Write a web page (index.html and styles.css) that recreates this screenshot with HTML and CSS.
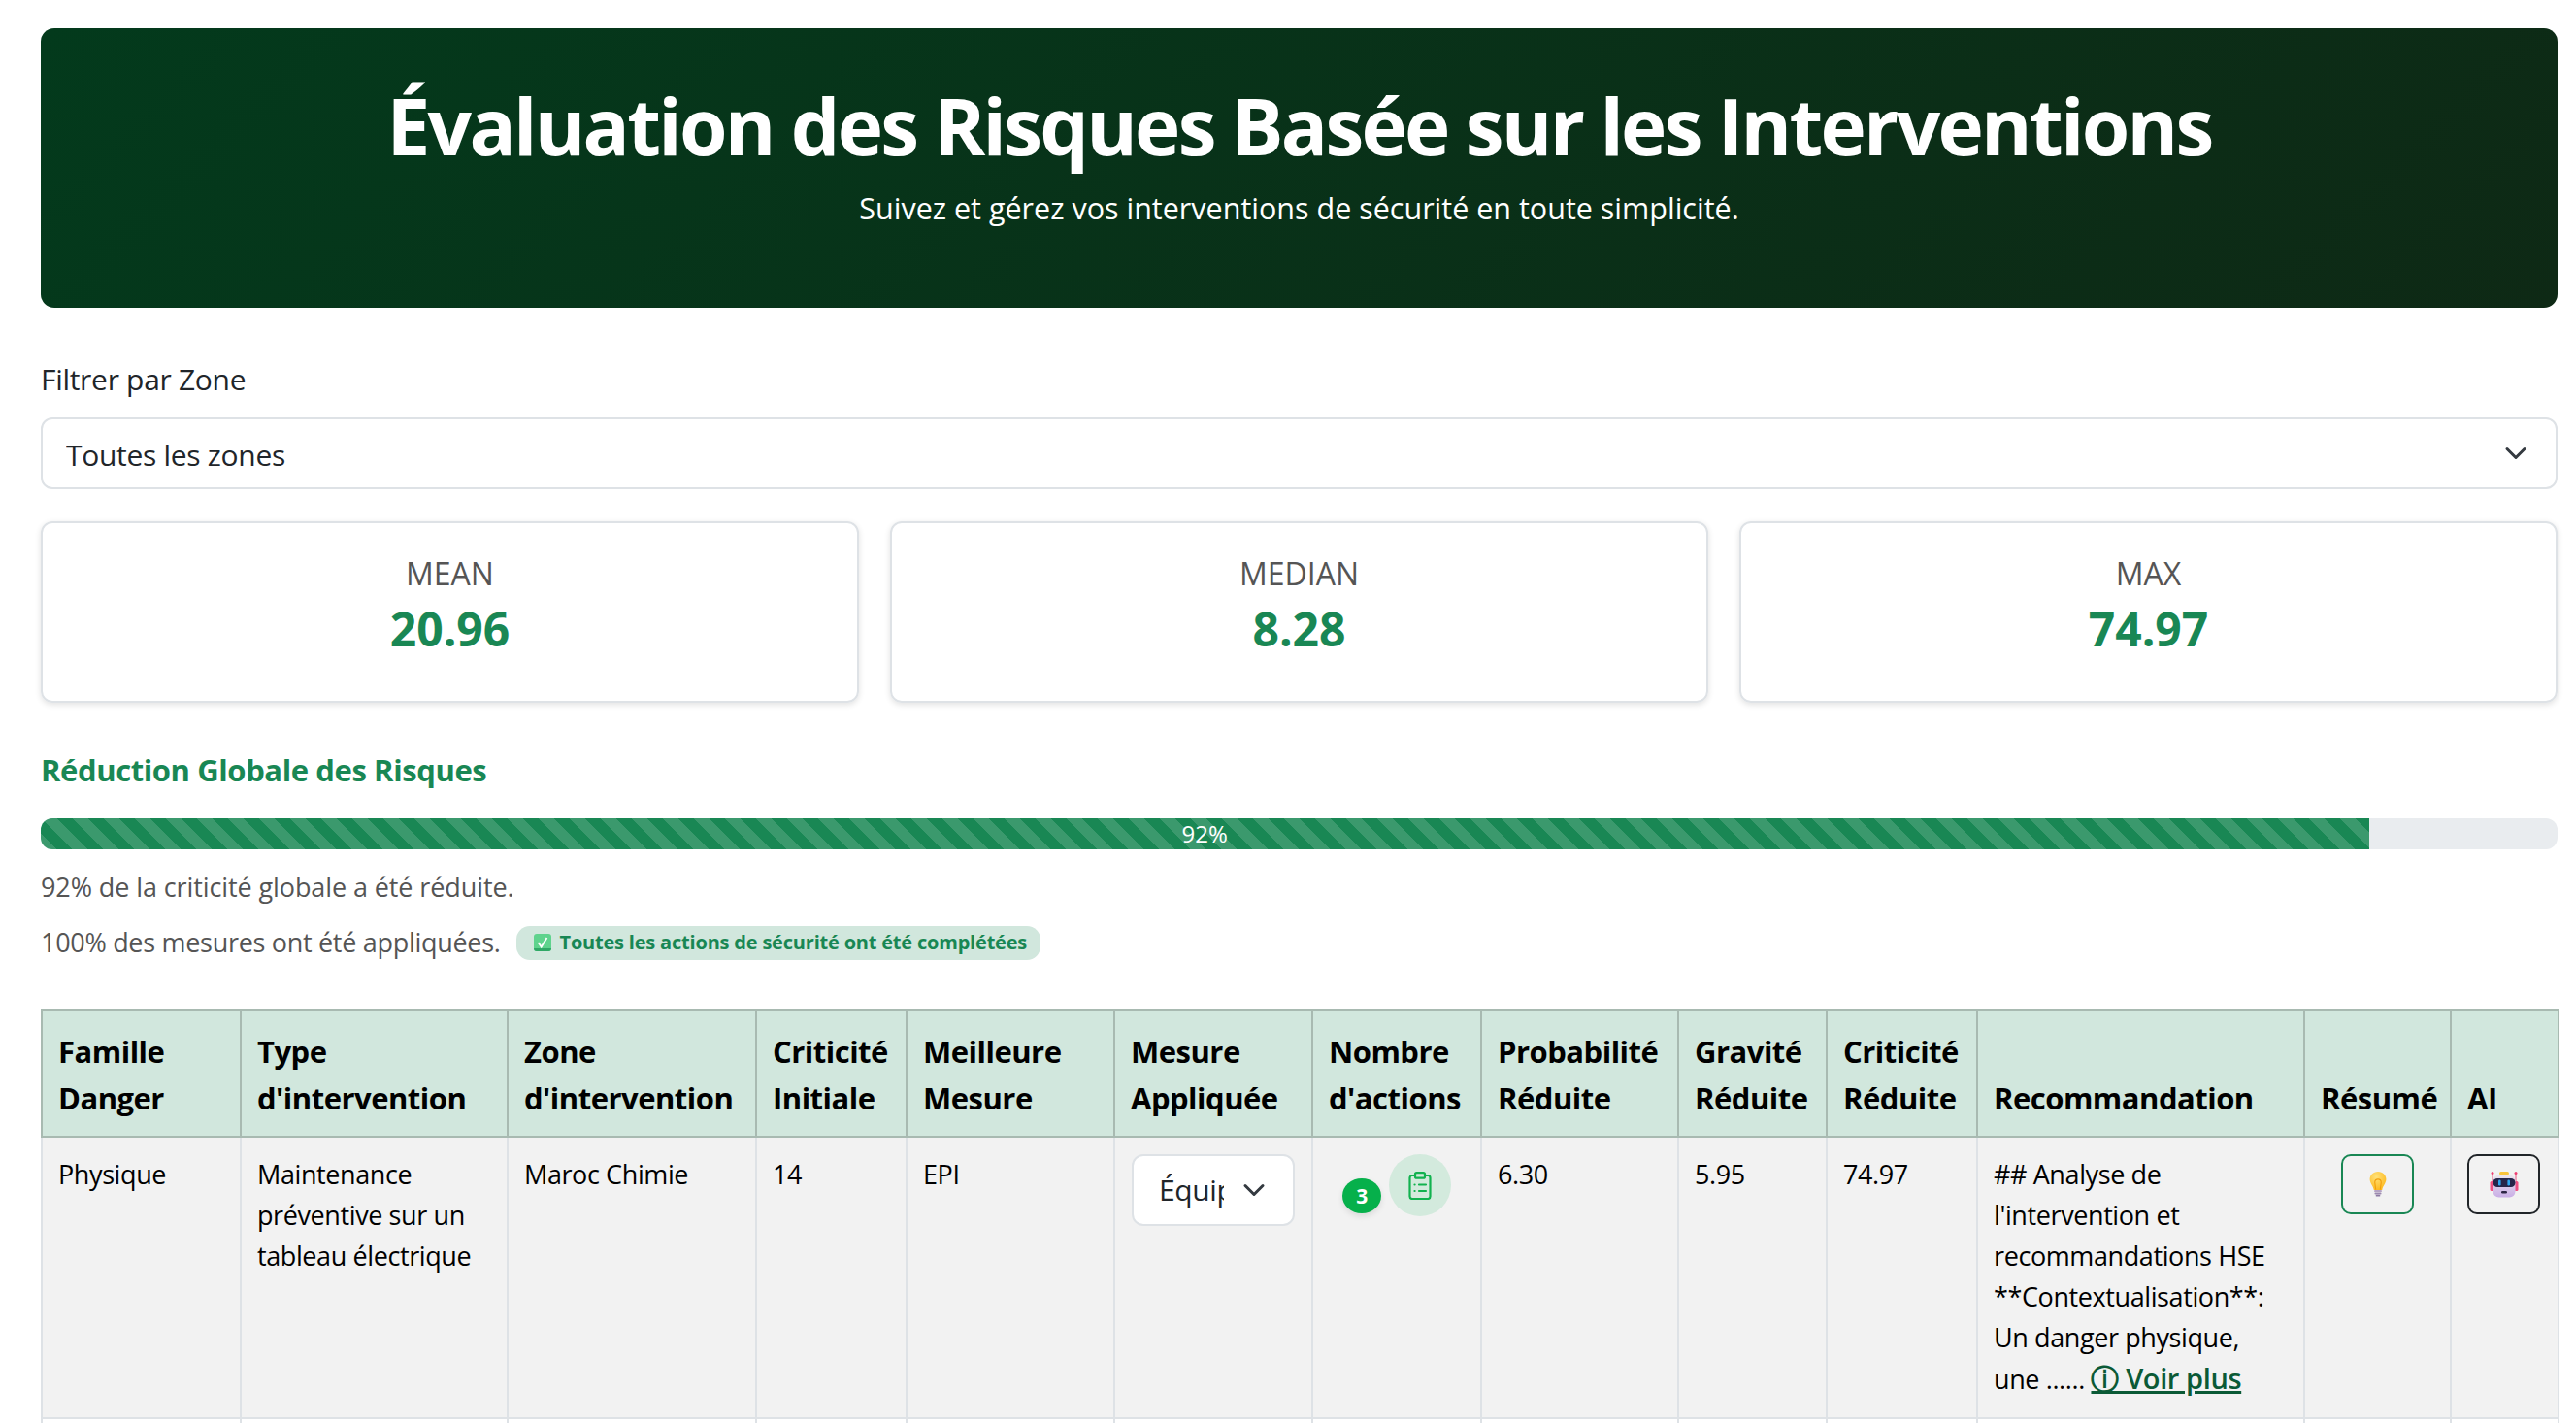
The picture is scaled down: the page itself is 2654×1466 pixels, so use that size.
FILE: index.html
```html
<!DOCTYPE html>
<html lang="fr">
<head>
    <meta charset="UTF-8">
    <title>Évaluation des Risques</title>
    <link rel="stylesheet" href="styles.css">
</head>
<body>
    <header class="hero">
        <h1>Évaluation des Risques Basée sur les Interventions</h1>
        <p>Suivez et gérez vos interventions de sécurité en toute simplicité.</p>
    </header>

    <label class="filter-label" for="zone">Filtrer par Zone</label>
    <select id="zone" class="select select-zone">
        <option>Toutes les zones</option>
    </select>

    <section class="stats">
        <div class="stat"><div class="stat-name">MEAN</div><div class="stat-value">20.96</div></div>
        <div class="stat"><div class="stat-name">MEDIAN</div><div class="stat-value">8.28</div></div>
        <div class="stat"><div class="stat-name">MAX</div><div class="stat-value">74.97</div></div>
    </section>

    <h2 class="section-title">Réduction Globale des Risques</h2>
    <div class="progress">
        <div class="progress-bar" style="width: 92.5%">92%</div>
    </div>
    <p class="note note-first">92% de la criticité globale a été réduite.</p>
    <p class="note note-second">
        100% des mesures ont été appliquées.
        <span class="done-badge">
            <svg class="done-icon" viewBox="0 0 20 20">
                <rect x="1" y="1" width="18" height="18" rx="3" fill="#5fd38d"/>
                <path d="M1 16a3 3 0 0 0 3 3h12a3 3 0 0 0 3-3z" fill="#2fa866"/>
                <path d="M5.500 10l3.200 4.500L14.500 5" fill="none" stroke="#fff" stroke-width="1.800"/>
            </svg>
            Toutes les actions de sécurité ont été complétées
        </span>
    </p>

    <table class="risks">
        <colgroup>
            <col class="c-famille"><col class="c-type"><col class="c-zone"><col class="c-crit"><col class="c-best">
            <col class="c-mesure"><col class="c-nb"><col class="c-proba"><col class="c-grav"><col class="c-critr">
            <col class="c-reco"><col class="c-resume"><col class="c-ai">
        </colgroup>
        <thead>
            <tr>
                <th>Famille Danger</th>
                <th>Type d'intervention</th>
                <th>Zone d'intervention</th>
                <th>Criticité Initiale</th>
                <th>Meilleure Mesure</th>
                <th>Mesure Appliquée</th>
                <th>Nombre d'actions</th>
                <th>Probabilité Réduite</th>
                <th>Gravité Réduite</th>
                <th>Criticité Réduite</th>
                <th>Recommandation</th>
                <th>Résumé</th>
                <th>AI</th>
            </tr>
        </thead>
        <tbody>
            <tr class="row-odd">
                <td>Physique</td>
                <td>Maintenance préventive sur un tableau électrique</td>
                <td>Maroc Chimie</td>
                <td>14</td>
                <td>EPI</td>
                <td><select class="select select-mesure"><option>Équipement</option></select></td>
                <td>
                    <div class="actions">
                        <span class="count">3</span>
                        <span class="actions-btn">
                            <svg viewBox="0 0 24 29" fill="none" stroke="#12b24f" stroke-width="2.200" stroke-linecap="round" stroke-linejoin="round">
                                <path d="M7 4H4a2.500 2.500 0 0 0-2.500 2.500v19A2.500 2.500 0 0 0 4 28h16a2.500 2.500 0 0 0 2.500-2.500v-19A2.500 2.500 0 0 0 20 4h-3"/>
                                <rect x="7" y="1.200" width="10" height="5.500" rx="1.500"/>
                                <path d="M6.500 13.500h.1M11 13.500h7M6.500 20h.1M11 20h7"/>
                            </svg>
                        </span>
                    </div>
                </td>
                <td>6.30</td>
                <td>5.95</td>
                <td>74.97</td>
                <td>## Analyse de l'intervention et recommandations HSE **Contextualisation**: Un danger physique, une ...... <a class="more" href="#">ⓘ Voir plus</a></td>
                <td class="cell-center">
                    <button class="icon-btn btn-green">
                        <svg viewBox="0 0 20 30">
                            <defs>
                                <radialGradient id="bulb" cx="0.4" cy="0.3" r="0.8">
                                    <stop offset="0" stop-color="#ffe27a"/>
                                    <stop offset="1" stop-color="#fdb515"/>
                                </radialGradient>
                            </defs>
                            <path d="M10 1C4.500 1 1 5 1 9.500c0 4.500 3.500 7 4.500 12h9c1-5 4.500-7.500 4.500-12C19 5 15.500 1 10 1z" fill="url(#bulb)"/>
                            <path d="M7.500 21l-1-8a3.500 3.500 0 1 1 7 0l-1 8" fill="none" stroke="#f29f0d" stroke-width="1.200"/>
                            <rect x="5.800" y="21.500" width="8.400" height="2.200" rx="1" fill="#b5a3c4"/>
                            <rect x="6.200" y="24" width="7.600" height="2.200" rx="1" fill="#9d8bb0"/>
                            <rect x="7.500" y="26.500" width="5" height="2" rx="1" fill="#8d7ba3"/>
                        </svg>
                    </button>
                </td>
                <td>
                    <button class="icon-btn btn-dark">
                        <svg viewBox="0 0 30 28">
                            <defs>
                                <linearGradient id="robot" x1="0" y1="0" x2="0" y2="1">
                                    <stop offset="0" stop-color="#ece6ee"/>
                                    <stop offset="1" stop-color="#c9aee6"/>
                                </linearGradient>
                            </defs>
                            <path d="M3 3v10M27 3v10" stroke="#e8527f" stroke-width="1"/>
                            <circle cx="3" cy="2.500" r="1.500" fill="#ef3f73"/>
                            <circle cx="27" cy="2.500" r="1.500" fill="#ef3f73"/>
                            <rect x="0.500" y="11" width="4" height="10" rx="1.500" fill="#ef4f82"/>
                            <rect x="25.500" y="11" width="4" height="10" rx="1.500" fill="#ef4f82"/>
                            <rect x="3.500" y="4.500" width="23" height="23" rx="6" fill="url(#robot)"/>
                            <rect x="10" y="1" width="10" height="3.500" rx="1.700" fill="#f8c33c"/>
                            <rect x="3.500" y="8" width="23" height="9" rx="4.500" fill="#25254a"/>
                            <rect x="9" y="9.500" width="2.600" height="6" rx="1.300" fill="#2da5ef"/>
                            <rect x="18.400" y="9.500" width="2.600" height="6" rx="1.300" fill="#2da5ef"/>
                            <rect x="12" y="21" width="6" height="2.600" rx="1.300" fill="#2d2545"/>
                        </svg>
                    </button>
                </td>
            </tr>
            <tr class="row-even">
                <td></td><td></td><td></td><td></td><td></td><td></td><td></td><td></td><td></td><td></td><td></td><td></td><td></td>
            </tr>
        </tbody>
    </table>
</body>
</html>
```

FILE: styles.css
```css
html {
    height: 100%;
    overflow: hidden;
}
body {
    margin: 0;
    padding: 29px 19px 0 42px;
    font-family: "Open Sans", "Noto Sans", sans-serif;
    font-size: 30px;
    letter-spacing: -0.3px;
    line-height: 1.5;
    color: #212529;
    background-color: #fff;
}
.hero {
    height: 288px;
    box-sizing: border-box;
    padding-top: 48px;
    border-radius: 14px;
    background: linear-gradient(135deg, #033a1c, #0e2915);
    color: #fff;
    text-align: center;
}
.hero h1 {
    margin: 0;
    font-size: 80px;
    font-weight: 700;
    letter-spacing: -2.7px;
    line-height: 104px;
}
.hero p {
    margin: 9px 0 0;
    font-size: 30.500px;
    letter-spacing: 0;
    line-height: 48px;
}
.filter-label {
    display: block;
    margin-top: 50px;
    margin-bottom: 15px;
    line-height: 48px;
}
.select {
    display: block;
    appearance: none;
    box-sizing: border-box;
    height: 74px;
    border: 2px solid #dee2e6;
    border-radius: 12px;
    background-color: #fff;
    background-image: url("data:image/svg+xml,%3csvg xmlns='http://www.w3.org/2000/svg' viewBox='0 0 16 16'%3e%3cpath fill='none' stroke='%23343a40' stroke-linecap='round' stroke-linejoin='round' stroke-width='2' d='m2 5 6 6 6-6'/%3e%3c/svg%3e");
    background-repeat: no-repeat;
    background-size: 28px 24px;
    font: inherit;
    letter-spacing: inherit;
    color: #212529;
}
.select-zone {
    width: 100%;
    padding: 2px 72px 0 24px;
    background-position: right 27px center;
}
.stats {
    display: grid;
    grid-template-columns: repeat(3, 1fr);
    gap: 32px;
    margin-top: 33px;
}
.stat {
    height: 187px;
    box-sizing: border-box;
    padding-top: 28px;
    border: 2px solid #dee2e6;
    border-radius: 12px;
    box-shadow: 0 2px 6px rgba(0, 0, 0, 0.12);
    text-align: center;
}
.stat-name {
    font-size: 32px;
    letter-spacing: 0;
    line-height: 48px;
    color: #555;
}
.stat-value {
    font-size: 48px;
    font-weight: 700;
    letter-spacing: 0;
    line-height: 66px;
    color: #198754;
}
.section-title {
    margin: 45px 0 0;
    font-size: 31px;
    font-weight: 700;
    letter-spacing: -0.4px;
    line-height: 48px;
    color: #198754;
}
.progress {
    height: 32px;
    margin-top: 26px;
    border-radius: 12px;
    background-color: #e9ecef;
    overflow: hidden;
}
.progress-bar {
    height: 100%;
    background-color: #198754;
    background-image: linear-gradient(45deg, rgba(255, 255, 255, 0.15) 25%, transparent 25%, transparent 50%, rgba(255, 255, 255, 0.15) 50%, rgba(255, 255, 255, 0.15) 75%, transparent 75%, transparent);
    background-size: 32px 32px;
    color: #fff;
    font-size: 24px;
    letter-spacing: 0;
    line-height: 32px;
    text-align: center;
}
.note {
    margin: 0;
    font-size: 27px;
    line-height: 42px;
    color: #555;
}
.note-first {
    margin-top: 18px;
    letter-spacing: -0.1px;
}
.note-second {
    display: flex;
    align-items: center;
    gap: 16px;
    margin-top: 15px;
    letter-spacing: -0.3px;
}
.done-badge {
    display: inline-flex;
    align-items: center;
    gap: 8px;
    height: 35px;
    padding: 0 14px 0 17px;
    border-radius: 14px;
    background-color: #d1e7dd;
    font-size: 20px;
    font-weight: 700;
    letter-spacing: -0.2px;
    color: #198754;
}
.done-icon {
    width: 20px;
    height: 20px;
}
.risks {
    width: 2593px;
    margin-top: 48px;
    border-collapse: collapse;
    table-layout: fixed;
}
.c-famille { width: 205px; }
.c-type { width: 275px; }
.c-zone { width: 256px; }
.c-crit { width: 155px; }
.c-best { width: 214px; }
.c-mesure { width: 204px; }
.c-nb { width: 174px; }
.c-proba { width: 203px; }
.c-grav { width: 153px; }
.c-critr { width: 155px; }
.c-reco { width: 337px; }
.c-resume { width: 151px; }
.c-ai { width: 111px; }
.risks th {
    padding: 17px 16px 15px;
    border: 2px solid #a8bab1;
    background-color: #d1e7dd;
    font-size: 31px;
    font-weight: 700;
    letter-spacing: -0.5px;
    line-height: 48px;
    color: #000;
    text-align: left;
    vertical-align: bottom;
}
.risks td {
    padding: 17px 16px 18px;
    border: 2px solid #dee2e6;
    font-size: 27px;
    letter-spacing: -0.4px;
    line-height: 42px;
    color: #000;
    vertical-align: top;
}
.row-odd td {
    background-color: #f2f2f2;
}
.risks .row-even td {
    height: 8px;
    padding: 0;
    line-height: 0;
}
.cell-center {
    text-align: center;
}
.select-mesure {
    width: 168px;
    margin-left: 1px;
    padding: 0 71px 0 26px;
    font-size: 30px;
    background-position: right 26px center;
    background-size: 28px 24px;
}
.actions {
    display: flex;
    align-items: center;
    gap: 8px;
    margin-left: 14px;
}
.count {
    width: 40px;
    height: 36px;
    margin-top: 22px;
    border-radius: 50%;
    background-color: #06b04b;
    box-shadow: 0 3px 6px rgba(0, 0, 0, 0.1);
    color: #fff;
    font-size: 21px;
    font-weight: 700;
    line-height: 36px;
    text-align: center;
}
.actions-btn {
    display: flex;
    align-items: center;
    justify-content: center;
    width: 64px;
    height: 64px;
    border-radius: 50%;
    background-color: #d3eadd;
}
.actions-btn svg {
    width: 24px;
    height: 29px;
}
.more {
    color: #0b5a36;
    font-size: 29px;
    font-weight: 600;
    text-decoration-thickness: 3px;
}
.icon-btn {
    width: 75px;
    height: 62px;
    padding: 0;
    border-width: 2px;
    border-style: solid;
    border-radius: 10px;
    background: none;
}
.icon-btn svg {
    display: block;
    width: 30px;
    height: 28px;
    margin: 0 auto;
}
.btn-green {
    border-color: #198754;
}
.btn-dark {
    border-color: #212529;
}
```
